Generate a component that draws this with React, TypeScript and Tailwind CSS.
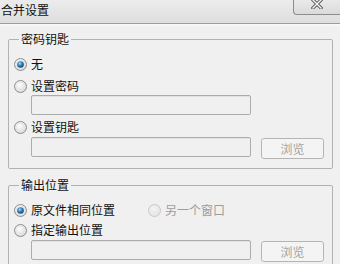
import React from "react";

const font = { fontFamily: '"Noto Sans CJK SC", "Noto Sans", sans-serif' };

function Radio({ checked = false, disabled = false }: { checked?: boolean; disabled?: boolean }) {
  const id = Math.random().toString(36).slice(2);
  return (
    <svg width="13" height="13" viewBox="0 0 13 13" className="shrink-0">
      <defs>
        <radialGradient id={"bg" + id} cx="0.4" cy="0.35" r="0.7">
          <stop offset="0" stopColor={disabled ? "#f4f4f4" : "#ffffff"} />
          <stop offset="1" stopColor={disabled ? "#e2e2e2" : "#d4d4d4"} />
        </radialGradient>
        <radialGradient id={"dot" + id} cx="0.4" cy="0.35" r="0.7">
          <stop offset="0" stopColor="#a9dcf6" />
          <stop offset="0.5" stopColor="#2a7fb8" />
          <stop offset="1" stopColor="#0f3e62" />
        </radialGradient>
      </defs>
      <circle cx="6.5" cy="6.5" r="6" fill={"url(#bg" + id + ")"} stroke={disabled ? "#c8c8c8" : "#8f8f8f"} strokeWidth="1" />
      <circle cx="6.5" cy="6.5" r="4.3" fill="none" stroke={disabled ? "#ececec" : "#e6e6e6"} strokeWidth="1" />
      {checked && <circle cx="6.5" cy="6.5" r="3.3" fill={"url(#dot" + id + ")"} />}
    </svg>
  );
}

function Input() {
  return <div className="w-[220px] h-[20px] rounded-[2px] border border-[#acacac] bg-[#f0f0f0] shadow-[inset_0_1px_0_#e3e3e3]" />;
}

function BrowseButton() {
  return (
    <div className="w-[63px] h-[21px] rounded-[3px] border border-[#b5b5b5] bg-[#f4f4f4] flex items-center justify-center text-[12px] text-[#a3a3a3] leading-none">
      浏览
    </div>
  );
}

function Row({ children, disabled = false }: { children: React.ReactNode; disabled?: boolean }) {
  return (
    <div className={"flex items-center gap-[4px] h-[16px] text-[12px] leading-none " + (disabled ? "text-[#9d9d9d]" : "text-[#111]")}>
      {children}
    </div>
  );
}

export default function App() {
  return (
    <div className="w-[340px] h-[264px] overflow-hidden bg-[#f0f0f0] flex flex-col" style={font}>
      {/* title bar */}
      <div className="relative h-[23px] shrink-0 bg-gradient-to-b from-[#ececec] to-[#dedede] flex items-start">
        <span className="pl-[1px] pt-[3px] text-[12px] leading-[14px] text-[#111]">合并设置</span>
        <div className="absolute right-0 top-0 w-[47px] h-[15px] border-l border-b border-[#8c8c8c] rounded-bl-[4px] bg-gradient-to-b from-[#eaeaea] to-[#dadada] flex items-start justify-center">
          <svg width="12" height="10" viewBox="0 0 12 10" className="-mt-[1px]">
            <path d="M2 1 L10 9 M10 1 L2 9" stroke="#555" strokeWidth="3.2" strokeLinecap="square" />
            <path d="M2 1 L10 9 M10 1 L2 9" stroke="#f8f8f8" strokeWidth="1.4" strokeLinecap="square" />
          </svg>
        </div>
      </div>
      <div className="h-[1px] shrink-0 bg-[#9c9c9c]" />
      <div className="h-[2px] shrink-0 bg-[#f8f8f8]" />

      <div className="flex flex-col px-[8px] pt-[5px] gap-[8px]">
        {/* group 1 */}
        <fieldset className="border border-[#b2b2b2] rounded-[2px] pl-[5px] pr-[8px] pb-[9px] w-[324px]">
          <legend className="ml-[5px] px-[2px] text-[12px] leading-[16px] text-[#111]">密码钥匙</legend>
          <div className="flex flex-col pt-[9px]">
            <Row><Radio checked /><span>无</span></Row>
            <div className="mt-[6px]"><Row><Radio /><span>设置密码</span></Row></div>
            <div className="mt-[1px] pl-[17px]"><Input /></div>
            <div className="mt-[4px]"><Row><Radio /><span>设置钥匙</span></Row></div>
            <div className="mt-[2px] pl-[17px] flex items-start gap-[10px]">
              <Input />
              <div className="mt-[1px]"><BrowseButton /></div>
            </div>
          </div>
        </fieldset>

        {/* group 2 */}
        <fieldset className="border border-[#b2b2b2] rounded-[2px] pl-[5px] pr-[8px] pb-[9px] w-[324px]">
          <legend className="ml-[5px] px-[2px] text-[12px] leading-[16px] text-[#111]">输出位置</legend>
          <div className="flex flex-col pt-[9px]">
            <div className="flex items-center">
              <Row><Radio checked /><span>原文件相同位置</span></Row>
              <div className="ml-[33px]"><Row disabled><Radio disabled /><span>另一个窗口</span></Row></div>
            </div>
            <div className="mt-[4px]"><Row><Radio /><span>指定输出位置</span></Row></div>
            <div className="mt-[2px] pl-[17px] flex items-start gap-[10px]">
              <Input />
              <div className="mt-[1px]"><BrowseButton /></div>
            </div>
          </div>
        </fieldset>
      </div>
    </div>
  );
}
